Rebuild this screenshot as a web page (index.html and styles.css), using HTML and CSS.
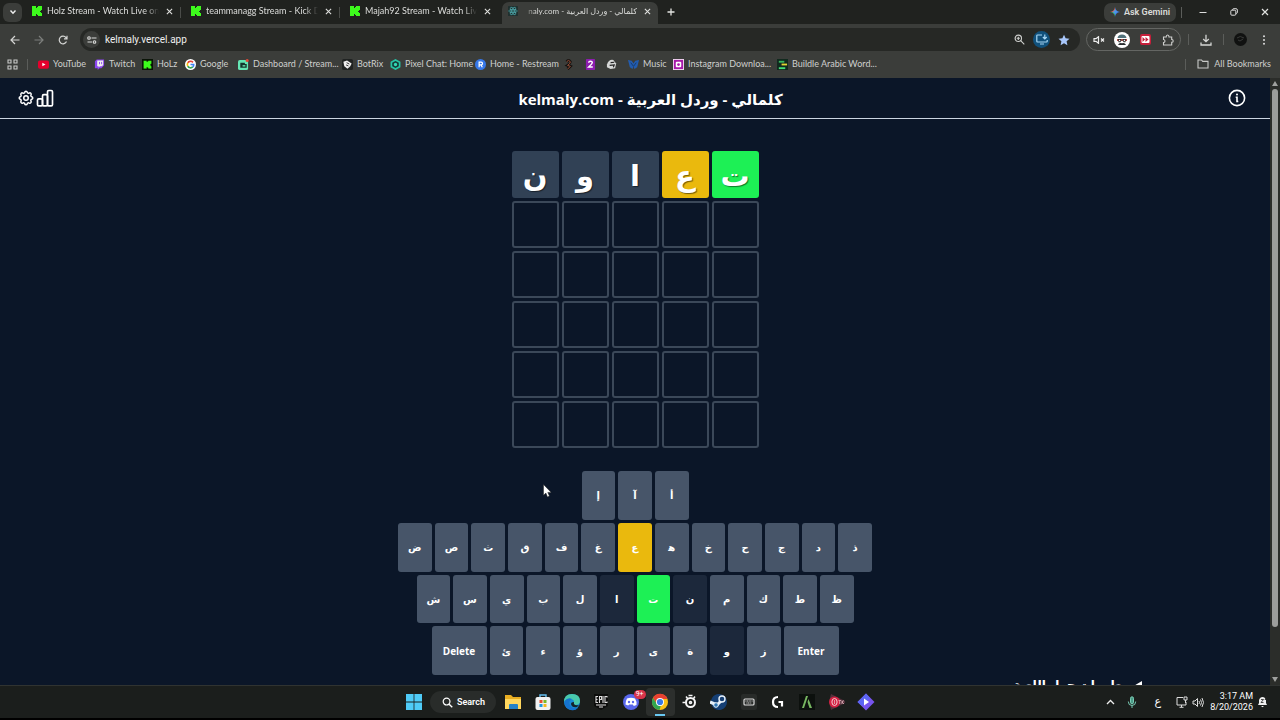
FILE: index.html
```html
<!DOCTYPE html>
<html lang="ar">
<head>
<meta charset="utf-8">
<title>كلمالي - وردل العربية - kelmaly.com</title>
<meta name="viewport" content="width=device-width, initial-scale=1">
<link rel="stylesheet" href="styles.css">
</head>
<body class="desktop">
<svg class="defs" aria-hidden="true">
  <symbol id="kick" viewBox="0 0 10 10"><path fill="#3dfb1c" d="M0 0h4v2h1V1h1V0h4v4H9v1H8v1h1v1h1v3H6V9H5V8H4v2H0z"/></symbol>
  <symbol id="close" viewBox="0 0 8 8"><path d="M1 1l6 6M7 1L1 7" fill="none" stroke="#e2e3e1" stroke-width="1.2"/></symbol>
</svg>

<header class="browser">
  <div class="tabs">
    <button class="tab-search" aria-label="Search tabs"><svg width="8" height="8" viewBox="0 0 8 8"><path d="M1.5 2.5L4 5.3l2.500-2.800" fill="none" stroke="#eee" stroke-width="1.4"/></svg></button>
    <div class="tab"><svg class="fav"><use href="#kick"/></svg><span class="tab-title">Holz Stream - Watch Live on Kic</span><button class="tab-close" aria-label="Close tab"><svg width="7" height="7"><use href="#close"/></svg></button></div>
    <div class="tab"><svg class="fav"><use href="#kick"/></svg><span class="tab-title">teammanagg Stream - Kick Das</span><button class="tab-close" aria-label="Close tab"><svg width="7" height="7"><use href="#close"/></svg></button></div>
    <div class="tab tab-last"><svg class="fav"><use href="#kick"/></svg><span class="tab-title">Majah92 Stream - Watch Live o</span><button class="tab-close" aria-label="Close tab"><svg width="7" height="7"><use href="#close"/></svg></button></div>
    <div class="tab tab-active"><svg class="fav" viewBox="0 0 12 12"><rect width="12" height="12" rx="1" fill="#20302f"/><g fill="none" stroke="#4fb0b4" stroke-width=".8"><ellipse cx="6" cy="6" rx="5.200" ry="2"/><ellipse cx="6" cy="6" rx="5.200" ry="2" transform="rotate(60 6 6)"/><ellipse cx="6" cy="6" rx="5.200" ry="2" transform="rotate(120 6 6)"/></g><circle cx="6" cy="6" r="1" fill="#4fb0b4"/></svg><span class="tab-title rtl" dir="rtl">كلمالي - وردل العربية - <bdi>naly.com</bdi></span><button class="tab-close" aria-label="Close tab"><svg width="7" height="7"><use href="#close"/></svg></button></div>
    <button class="new-tab" aria-label="New tab"><svg width="8" height="8" viewBox="0 0 8 8"><path d="M4 .5v7M.5 4h7" stroke="#e2e3e1" stroke-width="1.300"/></svg></button>
    <button class="gemini"><svg width="10" height="10" viewBox="0 0 10 10"><path d="M5 0Q5.500 4.500 10 5H5z" fill="#4b8df0"/><path d="M10 5Q5.500 5.500 5 10V5z" fill="#3f7fe8"/><path d="M5 10Q4.500 5.500 0 5h5z" fill="#3fae6a"/><path d="M0 5Q4.500 4.500 5 0v5z" fill="#e2685c"/><circle cx="5" cy="5" r="1.800" fill="#4b98e8"/></svg>Ask Gemini</button>
    <span class="sep"></span>
    <div class="window-buttons">
      <button aria-label="Minimize"><svg width="8" height="8" viewBox="0 0 8 8"><path d="M.5 4.500h7" stroke="#ddd"/></svg></button>
      <button aria-label="Restore"><svg width="8" height="8" viewBox="0 0 8 8"><g fill="none" stroke="#ddd"><rect x=".8" y="2.200" width="5" height="5" rx="1"/><path d="M2.500 1.800Q2.500.7 4 .7h2q1.400 0 1.400 1.400v2q0 1.300-1.200 1.400"/></g></svg></button>
      <button aria-label="Close"><svg width="8" height="8"><use href="#close"/></svg></button>
    </div>
  </div>

  <div class="toolbar">
    <div class="nav">
      <button aria-label="Back"><svg width="10" height="10" viewBox="0 0 10 10"><path d="M9.500 5H1.200M5 1L1 5l4 4" fill="none" stroke="#d5d6d4" stroke-width="1.200"/></svg></button>
      <button aria-label="Forward"><svg width="10" height="10" viewBox="0 0 10 10"><path d="M.5 5h8.300M5 1l4 4-4 4" fill="none" stroke="#7d7f7c" stroke-width="1.200"/></svg></button>
      <button aria-label="Reload"><svg width="10" height="10" viewBox="0 0 10 10"><path d="M8.500 6.500A3.800 3.800 0 1 1 8 2.600L9 3.800M9 .8v3H6" fill="none" stroke="#d5d6d4" stroke-width="1.200"/></svg></button>
    </div>
    <div class="omnibox">
      <button class="site-info" aria-label="Site information"><svg width="10" height="8" viewBox="0 0 10 8"><g fill="none" stroke="#dcdddb" stroke-width="1.100"><circle cx="2" cy="2" r="1.300"/><path d="M4.500 2H9.500M.5 6H5"/><circle cx="7.500" cy="6" r="1.300"/></g></svg></button>
      <input class="url" aria-label="Address" value="kelmaly.vercel.app">
      <button aria-label="Zoom"><svg width="11" height="11" viewBox="0 0 11 11"><g fill="none" stroke="#cfd0ce" stroke-width="1.100"><circle cx="4.300" cy="4.300" r="3.200"/><path d="M6.700 6.700L10.300 10.300M2.700 4.300h3.200M4.300 2.700v3.200"/></g></svg></button>
      <button class="install" aria-label="Install app"><svg width="12" height="11" viewBox="0 0 12 11"><path d="M6 1H1.500q-.7 0-.7.7v5.600q0 .7.700.7h9q.7 0 .7-.7V6M4 10h4M8.800.5v4.300M6.900 3l1.900 2 1.900-2" fill="none" stroke="#a8d8f5" stroke-width="1.200"/></svg></button>
      <button aria-label="Bookmark this tab"><svg width="12" height="12" viewBox="0 0 12 12"><path fill="#a8c7fa" d="M6 .7l1.600 3.600 3.900.4-2.900 2.600.8 3.900L6 9.200l-3.400 2 .8-3.900L.5 4.700l3.900-.4z"/></svg></button>
    </div>
    <div class="extensions">
      <button aria-label="Mute"><svg width="12" height="8" viewBox="0 0 12 8"><path d="M1 2.700h2L5.500.7v6.600L3 5.300H1zM8 2.500l3 3M11 2.500l-3 3" fill="none" stroke="#eee" stroke-width="1.200"/></svg></button>
      <button aria-label="Incognito extension"><svg width="16" height="16" viewBox="0 0 16 16"><circle cx="8" cy="8" r="8" fill="#fff"/><path d="M3.500 6Q4 2.500 8 2.500T12.500 6z" fill="#51717a"/><path d="M3 7h10v2H3z" fill="#b94b43"/><path d="M4 7h3l.5 1.500-1.200 1.700H4.500zM12 7H9l-.5 1.500 1.200 1.700h1.800z" fill="#333"/><circle cx="5.600" cy="8.500" r=".7" fill="#fff"/><circle cx="10.400" cy="8.500" r=".7" fill="#fff"/><path d="M4 13Q5 10.500 8 11.300q3-.8 4 1.700z" fill="#282b2d"/></svg></button>
      <button aria-label="Speed extension"><svg width="11" height="11" viewBox="0 0 11 11"><rect width="11" height="11" rx="2" fill="#c61f3a"/><rect x="1.500" y="2" width="8" height="7" rx="1" fill="#fff"/><path d="M2.500 3l2.600 2.500L2.500 8zM5.500 3l3 2.500-3 2.500z" fill="#c61f3a"/></svg></button>
      <button aria-label="Extensions"><svg width="12" height="12" viewBox="0 0 12 12"><path d="M1.500 3h2.700Q4.200 1 5.600 1T7 3h2.700v2.500q1.500 0 1.500 1.400T9.700 8.300V11H1.500V8.500Q3 8.300 3 7T1.500 5.500z" fill="none" stroke="#cfd0ce" stroke-width="1.100"/></svg></button>
    </div>
    <span class="sep"></span>
    <button class="download" aria-label="Downloads"><svg width="12" height="12" viewBox="0 0 12 12"><path d="M6 .8v6.700M3.200 5L6 7.700 8.800 5M1 8.500V11h10V8.500" fill="none" stroke="#d5d6d4" stroke-width="1.300"/></svg></button>
    <span class="sep"></span>
    <button class="profile" aria-label="Profile"><svg width="13" height="13" viewBox="0 0 13 13"><circle cx="6.500" cy="6.500" r="6.500" fill="#101110"/><path d="M3 5q3-3 7 0M4 7l2 1 3-2" fill="none" stroke="#383a38"/></svg></button>
    <button class="menu" aria-label="Menu"><svg width="4" height="10" viewBox="0 0 4 10"><g fill="#ddd"><circle cx="2" cy="1.200" r="1"/><circle cx="2" cy="5" r="1"/><circle cx="2" cy="8.800" r="1"/></g></svg></button>
  </div>

  <nav class="bookmarks">
    <button class="apps" aria-label="Apps"><svg width="11" height="11" viewBox="0 0 11 11"><g fill="none" stroke="#c9cac8" stroke-width="1.100"><path d="M1 1h3v3H1zM7 1h3v3H7zM1 7h3v3H1zM7 7h3v3H7z"/></g></svg></button>
    <span class="sep"></span>
    <div class="bookmark-list">
      <a href="#"><svg viewBox="0 0 12 12"><rect y="1.500" width="12" height="9" rx="2" fill="#e5002d"/><path d="M4.700 4l3.500 2-3.500 2z" fill="#fff"/></svg>YouTube</a>
      <a href="#"><svg viewBox="0 0 12 12"><path d="M1 2.500L3 .5h8v6.500L8 10H6l-2 2v-2H1z" fill="#8b45ef"/><path d="M3.500 1.500H10v5L8.500 8h-2L5 9.200V8H3.500z" fill="#eee"/><path d="M6 3.200v2.500M8.300 3.200v2.500" stroke="#8b45ef"/></svg>Twitch</a>
      <a href="#"><svg viewBox="0 0 12 12"><rect width="12" height="12" fill="#0a1407"/><use href="#kick" x="1.500" y="1.500" width="9" height="9"/></svg>HoLz</a>
      <a href="#"><svg viewBox="0 0 12 12"><circle cx="6" cy="6" r="6" fill="#fff"/><g fill="none" stroke-width="1.800"><path d="M8.700 3.700A3.500 3.500 0 0 0 3 4.300" stroke="#e94235"/><path d="M3 4.300a3.500 3.500 0 0 0 0 3.400" stroke="#fabb05"/><path d="M3 7.700a3.500 3.500 0 0 0 5.500 1" stroke="#34a853"/><path d="M8.500 8.700A3.500 3.500 0 0 0 9.500 6H6" stroke="#4285f4"/></g></svg>Google</a>
      <a href="#"><svg viewBox="0 0 12 12"><rect y="1" width="11" height="11" rx="2" fill="#65e6b4"/><path d="M2.500 4h5v1.500h2v4h-7z" fill="#15352d"/><path d="M5 6.700h3v1.500H5z" fill="#65e6b4"/><circle cx="10" cy="1.700" r="1.700" fill="#df4939"/></svg>Dashboard / Stream...</a>
      <a href="#"><svg viewBox="0 0 12 12"><rect width="12" height="12" rx="2" fill="#202322"/><path d="M1.500 3l4-1.500L10.500 5 9 8l-3 2.500L2.500 8z" fill="#eee"/><path d="M5 4l3 1.500M4.500 6.500l2.500 1" stroke="#282a29"/></svg>BotRix</a>
      <a href="#"><svg viewBox="0 0 12 12"><path d="M6 1l4.500 2.500v5L6 11 1.500 8.500v-5z" fill="#153a37" stroke="#27c3a5" stroke-width="1.800"/><circle cx="6" cy="6" r="1.800" fill="#35d8b6"/></svg>Pixel Chat: Home</a>
      <a href="#"><svg viewBox="0 0 12 12"><circle cx="6" cy="6" r="6" fill="#3677e8"/><path d="M4.500 9V3.500h2.200a1.500 1.500 0 0 1 0 3H4.500M6.500 6.500L8 9" stroke="#fff" stroke-width="1.300" fill="none"/></svg>Home - Restream</a>
      <a href="#" aria-label="Bookmark"><svg viewBox="0 0 12 12"><path d="M4 3q2-3 4 0 0 2-3 4l3 1-3 3" fill="none" stroke="#15100e" stroke-width="3"/><path d="M4 3q2-3 4 0 0 2-3 4l3 1-3 3" fill="none" stroke="#a3563d"/></svg></a>
      <a href="#" aria-label="Bookmark"><svg viewBox="0 0 12 12"><rect x="1" width="10" height="12" rx="1" fill="#8d1daf"/><path d="M4 4q0-1.500 2-1.500t2 1.300Q8 5 4 8.700h4.500" fill="none" stroke="#fff" stroke-width="1.500"/></svg></a>
      <a href="#" aria-label="Bookmark"><svg viewBox="0 0 12 12"><path d="M1 6Q3 0 8 1l3 4-1 5-5 1-4-2z" fill="#d6d8d7"/><path d="M5 4l4-.5M4 7l5-.5-1 2.500" fill="none" stroke="#222" stroke-width="1.200"/></svg></a>
      <a href="#"><svg viewBox="0 0 12 12"><path d="M0 1l4 1 2 3 2-3 4-1-2 8-3 2-1-3-1 3-3-2z" fill="#225caf"/><path d="M3 4l3 4 3-4" fill="none" stroke="#173968"/></svg>Music</a>
      <a href="#"><svg viewBox="0 0 12 12"><rect width="12" height="12" fill="#f1d8f2"/><rect x="1" y="1" width="10" height="10" fill="#a719aa"/><rect x="3" y="3" width="6" height="6" rx="1" fill="#fff"/><circle cx="6" cy="6" r="1.500" fill="#a719aa"/></svg>Instagram Downloa...</a>
      <a href="#"><svg viewBox="0 0 12 12"><rect width="12" height="12" fill="#112a1e"/><path d="M2 2h6v2H2z" fill="#36b45e"/><path d="M5 5h6v2H5z" fill="#e4d333"/><path d="M2 9h7v2H2z" fill="#43df78"/></svg>Buildle Arabic Word...</a>
    </div>
    <span class="sep"></span>
    <button class="all-bookmarks"><svg width="12" height="10" viewBox="0 0 12 10"><path d="M1 1h3.500l1.200 1.400H11V9H1z" fill="none" stroke="#c9cac8" stroke-width="1.100"/></svg>All Bookmarks</button>
  </nav>
</header>

<div class="viewport">
  <div class="page">
    <header class="game-header">
      <div class="game-tools">
        <button aria-label="الإعدادات"><svg width="18" height="18" viewBox="0 0 24 24"><g fill="none" stroke="#fff" stroke-width="2" stroke-linejoin="round"><path d="M10.300 4.300c.4-1.800 2.900-1.800 3.400 0a1.700 1.700 0 0 0 2.600 1.100c1.500-.9 3.300.8 2.400 2.400a1.700 1.700 0 0 0 1 2.500c1.800.5 1.800 3 0 3.400a1.700 1.700 0 0 0-1 2.600c.9 1.500-.9 3.300-2.400 2.400a1.700 1.700 0 0 0-2.600 1c-.5 1.800-3 1.800-3.400 0a1.700 1.700 0 0 0-2.600-1c-1.500.9-3.300-.9-2.400-2.400a1.700 1.700 0 0 0-1-2.600c-1.800-.4-1.800-2.900 0-3.400a1.700 1.700 0 0 0 1-2.500c-.9-1.600.9-3.300 2.400-2.400 1 .6 2.300.1 2.600-1.100z"/><circle cx="12" cy="12" r="3"/></g></svg></button>
        <button aria-label="الإحصائيات"><svg width="20" height="20" viewBox="0 0 24 24"><g fill="none" stroke="#fff" stroke-width="2"><rect x="3" y="13" width="6" height="8.500" rx="1.500"/><rect x="9" y="8" width="6" height="13.500" rx="1.500"/><rect x="15" y="3" width="6" height="18.500" rx="1.500"/></g></svg></button>
      </div>
      <h1 dir="rtl">كلمالي - وردل العربية - kelmaly.com</h1>
      <button aria-label="معلومات"><svg width="18" height="18" viewBox="0 0 18 18"><g fill="none" stroke="#fff" stroke-width="1.600"><circle cx="9" cy="9" r="7.600"/><path d="M7.700 8.300H9V12.500h1.300"/></g><circle cx="9" cy="5.500" r="1" fill="#fff"/></svg></button>
    </header>

    <main class="game">
      <div class="board" dir="rtl">
        <div class="tile hit">ت</div><div class="tile near">ع</div><div class="tile miss">ا</div><div class="tile miss">و</div><div class="tile miss">ن</div>
        <div class="tile"></div><div class="tile"></div><div class="tile"></div><div class="tile"></div><div class="tile"></div>
        <div class="tile"></div><div class="tile"></div><div class="tile"></div><div class="tile"></div><div class="tile"></div>
        <div class="tile"></div><div class="tile"></div><div class="tile"></div><div class="tile"></div><div class="tile"></div>
        <div class="tile"></div><div class="tile"></div><div class="tile"></div><div class="tile"></div><div class="tile"></div>
        <div class="tile"></div><div class="tile"></div><div class="tile"></div><div class="tile"></div><div class="tile"></div>
      </div>

      <div class="keyboard">
        <div class="keys keys-3"><button>إ</button><button>آ</button><button>أ</button></div>
        <div class="keys keys-13"><button>ض</button><button>ص</button><button>ث</button><button>ق</button><button>ف</button><button>غ</button><button class="key-near">ع</button><button>ه&zwj;</button><button>خ</button><button>ح</button><button>ج</button><button>د</button><button>ذ</button></div>
        <div class="keys keys-12"><button>ش</button><button>س</button><button>ي</button><button>ب</button><button>ل</button><button class="key-miss">ا</button><button class="key-hit">ت</button><button class="key-miss">ن</button><button>م</button><button>ك</button><button>ط</button><button>ظ</button></div>
        <div class="keys keys-10"><button class="key-wide">Delete</button><button>ئ</button><button>ء</button><button>ؤ</button><button>ر</button><button>ى</button><button>ة</button><button class="key-miss">و</button><button>ز</button><button class="key-wide">Enter</button></div>
      </div>
    </main>

    <details class="about" dir="rtl"><summary>معلومات حول اللعبة</summary></details>
  </div>
  <div class="scrollbar">
    <svg width="6" height="5" viewBox="0 0 6 5"><path d="M3 0l3 5H0z" fill="#a0a19f"/></svg>
    <div class="track"><div class="thumb"></div></div>
    <svg width="6" height="5" viewBox="0 0 6 5"><path d="M3 5L0 0h6z" fill="#a0a19f"/></svg>
  </div>
  <svg class="pointer" width="9" height="14" viewBox="0 0 9 14"><path d="M.5.5v10.800l2.400-2.200 1.600 3.800 1.900-.8-1.600-3.700h3.400z" fill="#fff" stroke="#222" stroke-width=".5"/></svg>
</div>

<footer class="taskbar">
  <div class="dock">
    <button aria-label="Start"><svg viewBox="0 0 18 18"><path fill="#4fcbf7" d="M1 1h7.600v7.600H1zM9.400 1H17v7.600H9.400zM1 9.400h7.600V17H1zM9.400 9.400H17V17H9.400z"/></svg></button>
    <button class="search"><svg viewBox="0 0 12 12"><circle cx="5" cy="5" r="3.700" fill="none" stroke="#fff" stroke-width="1.300"/><path d="M7.800 7.800l3.400 3.400" stroke="#fff" stroke-width="1.500"/></svg>Search</button>
    <button aria-label="File Explorer"><svg viewBox="0 0 18 18"><path d="M1 2h6l2 2h8v12H1z" fill="#e9ae22"/><path d="M1 6h16v10H1z" fill="#ffd75e"/><path d="M5 16v-4q0-1 1-1h7q1 0 1 1v4z" fill="#2582c7"/></svg></button>
    <button aria-label="Store"><svg viewBox="0 0 18 18"><path d="M6 5V2h6v3" fill="none" stroke="#66bff0" stroke-width="1.400"/><rect x="1.500" y="4" width="15" height="13" rx="2" fill="#f2f2f2"/><path d="M5.500 7h3v3h-3z" fill="#e65031"/><path d="M9.500 7h3v3h-3z" fill="#7aba2a"/><path d="M5.500 11h3v3h-3z" fill="#2099e0"/><path d="M9.500 11h3v3h-3z" fill="#f5b921"/></svg></button>
    <button aria-label="Edge"><svg viewBox="0 0 18 18"><circle cx="9" cy="9" r="8" fill="#168bd7"/><path d="M1 9Q1 1 9 1t8 7q0 4-5 4-2-1-1-3 0-3-4-3-4 0-6 3z" fill="#49c9ac"/><path d="M1.500 8Q5 4 9 6q-4 2-2 6t8 3q-3 3-7 2-7-2-6.500-9z" fill="#1673cf"/><path d="M11 9q-1 4 5 3l-2 2Q9 15 8 11q0-2 3-2z" fill="#15232a"/></svg></button>
    <button aria-label="Epic Games"><svg viewBox="0 0 18 18"><path d="M2 1h14v12l-7 4-7-4z" fill="#0c0d0c"/><g fill="none" stroke="#ddd" stroke-width="1.100"><path d="M6 3.500H4v6h2M4 6.500h1.500M7.500 10V3.500h2v3h-2M11 3v7M15 4.500v-1h-2v6h2v-1M4 12h10M7 14h4"/></g></svg></button>
    <button class="has-badge" aria-label="Discord"><svg viewBox="0 0 18 18"><circle cx="9" cy="9" r="8" fill="#5967eb"/><path d="M5 5.500q4-1.500 8 0 2 3 1.500 6.500l-2.700 1-1-1.500H7.200l-1 1-2.700-1Q3.500 8 5 5.500z" fill="#fff"/><circle cx="7" cy="9" r="1.200" fill="#5967eb"/><circle cx="11" cy="9" r="1.200" fill="#5967eb"/></svg><span class="badge">9+</span></button>
    <button class="running" aria-label="Chrome"><svg viewBox="0 0 18 18"><circle cx="9" cy="9" r="8" fill="#fbc116"/><path d="M2 5a8 8 0 0 1 14.500 1H9L6 11z" fill="#e84031"/><path d="M2 5l4 6q2 2 4 1l-1.500 5A8 8 0 0 1 2 5z" fill="#31a650"/><circle cx="9" cy="9" r="4" fill="#fff"/><circle cx="9" cy="9" r="3.100" fill="#3979e8"/></svg></button>
    <button aria-label="SteelSeries"><svg viewBox="0 0 18 18"><g fill="none" stroke="#f5f5f5"><circle cx="9.500" cy="9.500" r="4.500" stroke-width="2"/><circle cx="9.500" cy="9.500" r="1" stroke-width="1.600"/><path d="M1.500 9.500h4M5 3.500l2 2.500M14 3.500l-1.500 2M7.500 2.500h4" stroke-width="1.500"/></g></svg></button>
    <button aria-label="Steam"><svg viewBox="0 0 18 18"><path d="M1 8a8 8 0 1 1 1 5z" fill="#153f74"/><path d="M0 9l7 3 5-5" fill="none" stroke="#e8f1fa" stroke-width="3"/><circle cx="12" cy="6" r="3" fill="#153f74" stroke="#e8f1fa" stroke-width="1.400"/><circle cx="6" cy="12" r="2.300" fill="#2f77b5" stroke="#e8f1fa"/></svg></button>
    <button aria-label="Keyboard app"><svg viewBox="0 0 18 18"><rect x="1" y="1" width="16" height="16" rx="2" fill="#282b29"/><rect x="4" y="6" width="10" height="6" rx="1" fill="none" stroke="#ddd" stroke-width="1.200"/><path d="M5.500 8h7M6.500 10h5" stroke="#ddd" stroke-dasharray="1 .6"/></svg></button>
    <button aria-label="Logitech G"><svg viewBox="0 0 18 18"><path d="M9 4Q4 4 4 9t5 5M9.500 9H13v4.500" fill="none" stroke="#fff" stroke-width="2.200"/></svg></button>
    <button aria-label="FiveM"><svg viewBox="0 0 18 18"><path fill="#0c100d" d="M1 1h16v16H1z"/><path d="M8 3h2l-4 12H4zM10.500 6L14 15h-2.500L9.500 9z" fill="#77b661"/></svg></button>
    <button aria-label="Recorder"><svg viewBox="0 0 18 18"><path d="M3 1l14 7v2L3 17Q0 9 3 1z" fill="#54303b"/><circle cx="6.500" cy="9" r="5.500" fill="#d42143"/><ellipse cx="6.500" cy="9" rx="2.600" ry="3.500" fill="none" stroke="#f8d0d5"/><path d="M6.500 7v4M10.500 7.500h2.500M11.700 7.500V11M14 7.500V11M14 9l2-1.500M14 9l2 2" stroke="#e3b3bc" stroke-width=".8"/></svg></button>
    <button aria-label="Media player"><svg viewBox="0 0 18 18"><path d="M9 .5L17.500 9 9 17.500.5 9z" fill="#7754ed"/><path d="M.5 9L9 .5 13 5 5 13z" fill="#5c65f2"/><path d="M7 5.500l5 3.500-5 3.500z" fill="#fff"/></svg></button>
  </div>
  <div class="tray">
    <button aria-label="Show hidden icons"><svg width="9" height="6" viewBox="0 0 9 6"><path d="M1 5l3.500-3.500L8 5" fill="none" stroke="#eee" stroke-width="1.300"/></svg></button>
    <button class="mic" aria-label="Microphone"><svg width="10" height="13" viewBox="0 0 10 13"><rect x="3.500" y=".8" width="3" height="7" rx="1.500" fill="#4c9b87" stroke="#79cbb4"/><path d="M1.300 5.500q0 4 3.700 4t3.700-4M5 9.500V12" fill="none" stroke="#79cbb4"/></svg></button>
    <button class="lang">ع</button>
    <button aria-label="Network"><svg width="12" height="12" viewBox="0 0 12 12"><path d="M7 1.500H1v7.500h9V6M3.500 11.300h4M5.500 9v2M8 1h3v3H8zM9.500 4v3" fill="none" stroke="#ddd"/></svg></button>
    <button aria-label="Volume"><svg width="12" height="11" viewBox="0 0 12 11"><path d="M1 4h2l2.500-2.500v8L3 7H1zM7 4q1 1.500 0 3M8.500 2.500q2 3 0 6M10 1q3 4.500 0 9" fill="none" stroke="#ddd"/></svg></button>
    <button class="clock"><time>3:17 AM</time><time>8/20/2026</time></button>
    <button aria-label="Notifications"><svg width="11" height="12" viewBox="0 0 11 12"><path d="M1 9l1-2V4q1-3 3.500-3T9 4v3l1 2zM4 10h3l-1.500 1.300z" fill="#eee"/><path d="M4 3.500h2.500L4 6.500h2.500M8 1h2L8 3.500h2" stroke="#222" fill="none" stroke-width=".8"/></svg></button>
  </div>
</footer>
</body>
</html>
```
FILE: styles.css
```css
* { box-sizing: border-box; }

.desktop {
  margin: 0;
  height: 100vh;
  display: flex;
  flex-direction: column;
  overflow: hidden;
  background: #000;
  color: #dcdddb;
  font: 9px/12px Roboto, "Open Sans", "DejaVu Sans", sans-serif;
}

button, input {
  margin: 0;
  padding: 0;
  border: 0;
  background: none;
  color: inherit;
  font: inherit;
}

button { display: flex; align-items: center; justify-content: center; }
svg { display: block; flex: none; }
.defs { position: absolute; width: 0; height: 0; }
.sep { width: 1px; height: 11px; background: #5b5d5a; flex: none; }

/* Browser chrome */
.browser { flex: none; background: #3b3d3a; }

.tabs {
  display: flex;
  align-items: center;
  height: 24px;
  padding-left: 3px;
  background: #20221f;
}
.tab-search { width: 19px; height: 19px; border-radius: 6px; background: #3b3d3a; }
.tab {
  display: flex;
  align-items: center;
  gap: 5px;
  width: 159px;
  height: 22px;
  padding: 0 7px 2px 10px;
}
.tab:not(.tab-active):not(.tab-last) {
  background: linear-gradient(#4a4c49, #4a4c49) right center / 1px 11px no-repeat;
}
.fav { width: 10px; height: 10px; }
.tab-title {
  flex: 1;
  min-width: 0;
  overflow: hidden;
  white-space: nowrap;
  font-family: Lato, "DejaVu Sans", sans-serif;
  mask-image: linear-gradient(to right, #000 88%, transparent);
}
.tab-title.rtl {
  font-size: 8px;
  mask-image: linear-gradient(to left, #000 88%, transparent);
}
.tab-close { width: 10px; height: 14px; }
.tab-active {
  align-self: flex-end;
  width: 156px;
  margin-left: 3px;
  padding: 0 6px 4px;
  border-radius: 7px 7px 0 0;
  background: #3b3d3a;
}
.new-tab { width: 26px; height: 20px; }
.gemini {
  gap: 4px;
  margin-left: auto;
  width: 72px;
  height: 19px;
  border-radius: 7px;
  background: #3b3d3a;
  font-weight: 600;
}
.gemini + .sep { margin: 0 5px; }
.window-buttons { display: flex; }
.window-buttons button { width: 31px; height: 22px; }

.toolbar {
  display: flex;
  align-items: center;
  height: 30px;
  padding: 1px 8px 0 3px;
}
.nav { display: flex; width: 77px; }
.nav button { width: 24px; height: 22px; }
.omnibox {
  flex: 1;
  display: flex;
  align-items: center;
  height: 23px;
  padding: 0 8px 0 3px;
  border-radius: 12px;
  background: #262825;
}
.site-info { width: 17px; height: 17px; border-radius: 9px; background: #3b3d3a; }
.url { flex: 1; min-width: 0; padding-left: 5px; font-size: 10px; color: #eee; }
.omnibox button:not(.site-info) { width: 17px; height: 17px; margin-left: 5px; }
.omnibox .install { border-radius: 9px; background: #11517c; }
.extensions {
  display: flex;
  align-items: center;
  width: 95px;
  height: 23px;
  margin: 0 7px 0 6px;
  border: 1px solid #646663;
  border-radius: 12px;
}
.extensions button { flex: 1; }
.download { width: 34px; }
.profile { width: 32px; }
.menu { width: 16px; }

.bookmarks {
  display: flex;
  align-items: center;
  height: 24px;
  padding: 0 9px 4px 7px;
  color: #cfd0ce;
  font-family: Lato, sans-serif;
}
.apps + .sep { margin: 0 10px 0 9px; }
.bookmark-list {
  flex: 1;
  display: grid;
  grid-template-columns: 56px 48px 43px 53px 104px 48px 85px 88px 22px 21px 22px 45px 104px 92px;
  white-space: nowrap;
}
.bookmark-list a {
  display: flex;
  align-items: center;
  gap: 4px;
  color: inherit;
  text-decoration: none;
}
.bookmark-list svg { width: 11px; height: 11px; }
.all-bookmarks { gap: 5px; margin-left: 11px; }

/* Game page */
.viewport {
  position: relative;
  flex: 1;
  min-height: 0;
  display: flex;
  background: #0b1628;
  color: #fff;
  font-family: "Open Sans", "DejaVu Sans", sans-serif;
}
.page { flex: 1; min-width: 0; overflow: hidden; }
.game-header {
  display: flex;
  align-items: center;
  height: 41px;
  padding: 0 24px 0 17px;
  border-bottom: 1px solid #cbd5e1;
}
.game-tools { display: flex; align-items: center; }
.game-header h1 {
  flex: 1;
  margin: 0;
  padding: 2px 0 0 18px;
  text-align: center;
  font-size: 15px;
  line-height: 24px;
  font-weight: 700;
}
.game {
  display: flex;
  flex-direction: column;
  align-items: center;
  gap: 23px;
  padding-top: 32px;
}
.board { display: grid; grid-template-columns: repeat(5, 47px); gap: 3px; }
.tile {
  display: flex;
  align-items: center;
  justify-content: center;
  height: 47px;
  border: 2px solid #3b4859;
  border-radius: 3px;
  font-size: 29px;
  line-height: 36px;
  font-weight: 700;
  text-shadow: 1px 1px 1px rgba(0, 0, 0, .5);
}
.miss { background: #314155; border-color: #314155; }
.near { background: #eab90d; border-color: #eab90d; }
.hit { background: #1df055; border-color: #1df055; }

.keyboard {
  display: flex;
  flex-direction: column;
  align-items: center;
  gap: 3px;
  height: 204px;
}
.keys { flex: 1; display: flex; gap: 3px; }
.keys-3 { width: 107px; }
.keys-13 { width: 474px; }
.keys-12 { width: 437px; }
.keys-10 { width: 407px; }
.keys button {
  flex: 1;
  border-radius: 3px;
  background: #475569;
  color: #fff;
  font-size: 10px;
  font-weight: 700;
}
.keys .key-wide { flex: 0 0 55px; }
.keys .key-near { background: #eab90d; }
.keys .key-hit { background: #1df055; }
.keys .key-miss { background: #1c283b; }

.about {
  padding-right: 128px;
  font-size: 12px;
  line-height: 20px;
  font-weight: 600;
}

.scrollbar {
  flex: none;
  display: flex;
  flex-direction: column;
  align-items: center;
  gap: 3px;
  width: 10px;
  padding: 3px 0;
  background: #2b2d2a;
}
.track { flex: 1; width: 6px; }
.thumb { height: 92%; border-radius: 3px; background: #9c9d9b; }
.pointer { position: absolute; left: 543px; top: 406px; }

/* Taskbar */
.taskbar {
  flex: none;
  display: grid;
  grid-template-columns: 1fr 482px 1fr;
  align-items: center;
  height: 35px;
  border-top: 1px solid #303331;
  border-bottom: 2px solid #000;
  background: #1b1e1c;
  color: #fff;
}
.dock { grid-column: 2; display: flex; align-items: center; }
.dock button { flex: 1; height: 28px; border-radius: 4px; }
.dock svg { width: 18px; height: 18px; }
.dock .search {
  flex: 0 0 66px;
  gap: 4px;
  height: 22px;
  margin: 0 2px;
  border-radius: 11px;
  background: #292c2a;
  font-weight: 600;
}
.dock .search svg { width: 11px; height: 11px; }
.has-badge { position: relative; }
.badge {
  position: absolute;
  top: 2px;
  right: 0;
  padding: 0 2px;
  border-radius: 5px;
  background: #d8344b;
  font-size: 7px;
  line-height: 9px;
}
.dock .running {
  background: linear-gradient(#69c8f2, #69c8f2) center bottom / 10px 2px no-repeat, #2c2f2d;
}
.tray {
  display: flex;
  align-items: center;
  justify-content: flex-end;
  gap: 4px;
  padding-right: 12px;
}
.mic { margin: 0 13px 0 8px; }
.lang { margin-right: 11px; font-size: 11px; }
.clock { flex-direction: column; align-items: flex-end; width: 45px; line-height: 11px; }
```
